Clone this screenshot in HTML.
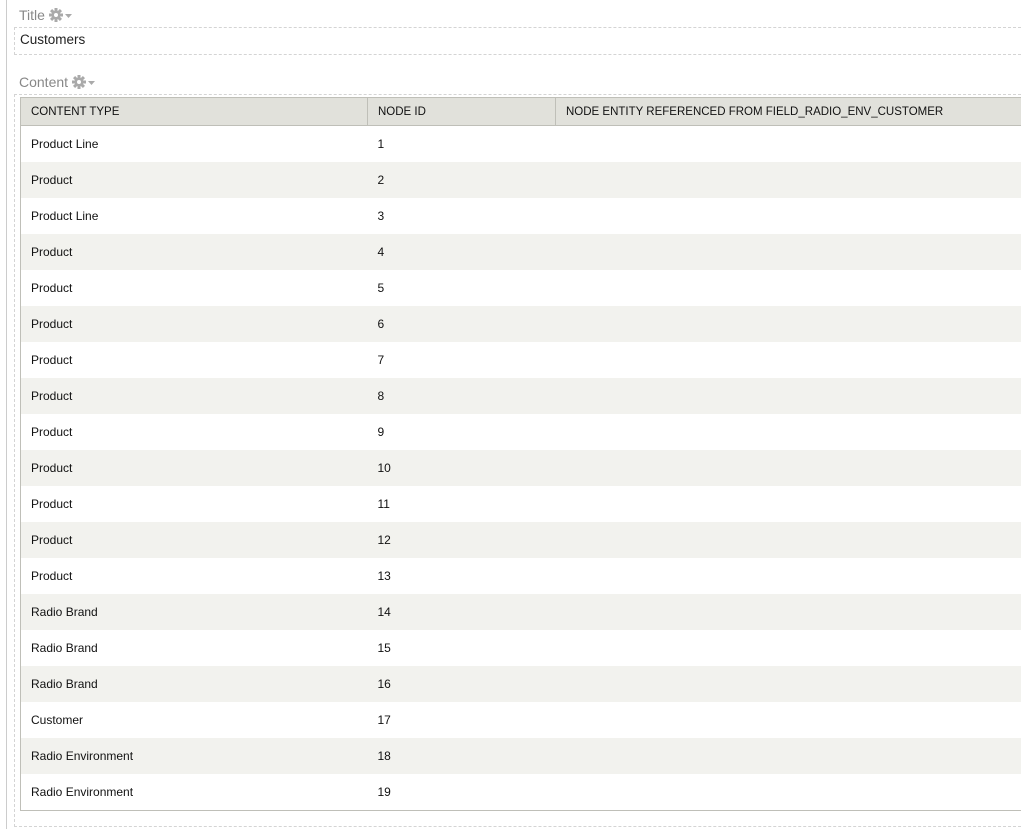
<!DOCTYPE html>
<html><head><style>
body{margin:0;background:#fff;font-family:"Liberation Sans",sans-serif;width:1021px;height:829px;overflow:hidden;position:relative}
.vl{position:absolute;left:6px;top:0;width:1px;height:829px;background:#ccc}
.lbl{position:absolute;left:19px;font-size:14px;color:#888}
.lbl svg{vertical-align:-2px;margin-left:4px}
.box{position:absolute;left:14px;right:-5px;border:1px dashed #d4d4d4}
table{position:absolute;left:20px;top:97px;width:1010px;border-collapse:collapse;border:1px solid #bfbfb8;font-size:12px;color:#111;table-layout:fixed}
th{background:#e1e1db;font-weight:normal;text-align:left;height:27px;padding:0 0 0 10px;border:1px solid #bfbfb8;font-size:11.5px}
td{height:36px;padding:0 0 0 10px}
tr:nth-child(odd) td{background:#f2f2ee}
</style></head><body>
<div class="vl"></div>
<div class="lbl" style="top:7px">Title<svg width="24" height="14" viewBox="0 0 24 14"><g fill="#aaa"><circle cx="7" cy="7" r="4.5"/><rect x="5.5" y="0" width="3" height="14"/><rect x="0" y="5.5" width="14" height="3"/><rect x="5.5" y="0" width="3" height="14" transform="rotate(45 7 7)"/><rect x="5.5" y="0" width="3" height="14" transform="rotate(-45 7 7)"/><circle cx="7" cy="7" r="2" fill="#fff"/><path d="M16 6h7l-3.5 4z"/></g></svg></div>
<div class="box" style="top:27px;height:26px"></div>
<div style="position:absolute;left:20px;top:32px;font-size:13.5px;color:#222">Customers</div>
<div class="lbl" style="top:74px">Content<svg width="24" height="14" viewBox="0 0 24 14"><g fill="#aaa"><circle cx="7" cy="7" r="4.5"/><rect x="5.5" y="0" width="3" height="14"/><rect x="0" y="5.5" width="14" height="3"/><rect x="5.5" y="0" width="3" height="14" transform="rotate(45 7 7)"/><rect x="5.5" y="0" width="3" height="14" transform="rotate(-45 7 7)"/><circle cx="7" cy="7" r="2" fill="#fff"/><path d="M16 6h7l-3.5 4z"/></g></svg></div>
<div class="box" style="top:94px;height:731px"></div>
<table>
<colgroup><col style="width:347px"><col style="width:188px"><col></colgroup>
<tr><th>CONTENT TYPE</th><th>NODE ID</th><th>NODE ENTITY REFERENCED FROM FIELD_RADIO_ENV_CUSTOMER</th></tr>
<tr><td>Product Line</td><td>1</td><td></td></tr>
<tr><td>Product</td><td>2</td><td></td></tr>
<tr><td>Product Line</td><td>3</td><td></td></tr>
<tr><td>Product</td><td>4</td><td></td></tr>
<tr><td>Product</td><td>5</td><td></td></tr>
<tr><td>Product</td><td>6</td><td></td></tr>
<tr><td>Product</td><td>7</td><td></td></tr>
<tr><td>Product</td><td>8</td><td></td></tr>
<tr><td>Product</td><td>9</td><td></td></tr>
<tr><td>Product</td><td>10</td><td></td></tr>
<tr><td>Product</td><td>11</td><td></td></tr>
<tr><td>Product</td><td>12</td><td></td></tr>
<tr><td>Product</td><td>13</td><td></td></tr>
<tr><td>Radio Brand</td><td>14</td><td></td></tr>
<tr><td>Radio Brand</td><td>15</td><td></td></tr>
<tr><td>Radio Brand</td><td>16</td><td></td></tr>
<tr><td>Customer</td><td>17</td><td></td></tr>
<tr><td>Radio Environment</td><td>18</td><td></td></tr>
<tr><td>Radio Environment</td><td>19</td><td></td></tr>
</table>
</body></html>
